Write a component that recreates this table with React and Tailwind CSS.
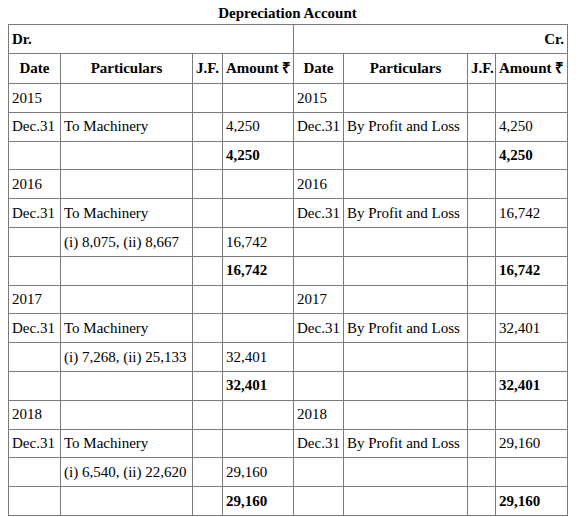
import React from 'react';

const cols = [52, 132, 30, 71, 50, 124, 28, 72];

const years = [
  { year: '2015', detail: null, amount: '4,250' },
  { year: '2016', detail: '(i) 8,075, (ii) 8,667', amount: '16,742' },
  { year: '2017', detail: '(i) 7,268, (ii) 25,133', amount: '32,401' },
  { year: '2018', detail: '(i) 6,540, (ii) 22,620', amount: '29,160' },
];

function Cell({ children, bold, center }) {
  return (
    <td
      className={`border border-[#7a7a7a] px-[3px] align-middle whitespace-nowrap overflow-hidden ${
        bold ? 'font-bold' : ''
      } ${center ? 'text-center' : ''}`}
    >
      {children}
    </td>
  );
}

export default function App() {
  const rows = [];
  years.forEach(y => {
    rows.push({ cells: [y.year, '', '', '', y.year, '', '', ''] });
    if (y.detail) {
      rows.push({ cells: ['Dec.31', 'To Machinery', '', '', 'Dec.31', 'By Profit and Loss', '', y.amount] });
      rows.push({ cells: ['', y.detail, '', y.amount, '', '', '', ''] });
    } else {
      rows.push({ cells: ['Dec.31', 'To Machinery', '', y.amount, 'Dec.31', 'By Profit and Loss', '', y.amount] });
    }
    rows.push({ cells: ['', '', '', y.amount, '', '', '', y.amount], bold: true });
  });

  return (
    <div className="bg-white px-2 pt-[4px] pb-2 text-[15px] leading-tight text-black font-['Liberation_Serif']">
      <div className="w-[559px] text-center font-bold h-[20px]">Depreciation Account</div>
      <table className="w-[559px] table-fixed border-collapse">
        <colgroup>
          {cols.map((w, i) => (
            <col key={i} style={{ width: w }} />
          ))}
        </colgroup>
        <tbody>
          <tr className="h-[29px]">
            <td colSpan={4} className="border border-[#7a7a7a] px-[3px] font-bold align-middle">
              Dr.
            </td>
            <td colSpan={4} className="border border-[#7a7a7a] px-[3px] font-bold text-right align-middle">
              Cr.
            </td>
          </tr>
          <tr className="h-[30px]">
            {['Date', 'Particulars', 'J.F.', 'Amount ₹', 'Date', 'Particulars', 'J.F.', 'Amount ₹'].map((h, i) => (
              <Cell key={i} bold center>
                {h}
              </Cell>
            ))}
          </tr>
          {rows.map((r, i) => (
            <tr key={i} className="h-[28.8px]">
              {r.cells.map((c, j) => (
                <Cell key={j} bold={r.bold}>
                  {c}
                </Cell>
              ))}
            </tr>
          ))}
        </tbody>
      </table>
    </div>
  );
}
